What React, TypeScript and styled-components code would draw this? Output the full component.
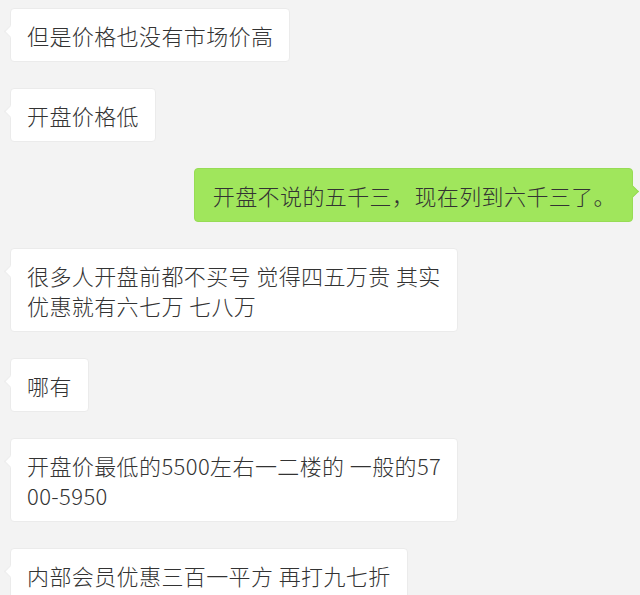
import React from 'react';
import styled, { createGlobalStyle } from 'styled-components';

const GlobalStyle = createGlobalStyle`
  html, body {
    margin: 0;
    padding: 0;
    background: #f3f3f3;
  }
  body {
    font-family: "Noto Sans CJK SC", "Noto Sans", sans-serif;
  }
`;

const Chat = styled.div`
  display: flex;
  flex-direction: column;
  gap: 26px;
  padding: 8px 7px 0 10px;
  height: 595px;
  box-sizing: border-box;
  overflow: hidden;
`;

const Row = styled.div<{ $mine?: boolean }>`
  display: flex;
  justify-content: ${(p) => (p.$mine ? 'flex-end' : 'flex-start')};
`;

const Bubble = styled.div<{ $mine?: boolean }>`
  position: relative;
  padding: 11px 16px;
  padding-left: ${(p) => (p.$mine ? '18px' : '16px')};
  border-radius: 4px;
  font-size: 22px;
  font-weight: 300;
  line-height: 30px;
  letter-spacing: 0.4px;
  color: #333333;
  white-space: nowrap;
  background: ${(p) => (p.$mine ? '#a0e65c' : '#ffffff')};
  border: 1px solid ${(p) => (p.$mine ? '#97dc55' : '#ebebeb')};
  box-sizing: border-box;

  &::before {
    content: '';
    position: absolute;
    top: 18px;
    width: 8px;
    height: 8px;
    background: inherit;
    transform: rotate(45deg);
    ${(p) =>
      p.$mine
        ? 'right: -5px; border-top: 1px solid #97dc55; border-right: 1px solid #97dc55;'
        : 'left: -5px; border-bottom: 1px solid #ebebeb; border-left: 1px solid #ebebeb;'}
  }
`;

type Message = { mine?: boolean; lines: string[] };

const messages: Message[] = [
  { lines: ['但是价格也没有市场价高'] },
  { lines: ['开盘价格低'] },
  { mine: true, lines: ['开盘不说的五千三，现在列到六千三了。'] },
  { lines: ['很多人开盘前都不买号 觉得四五万贵 其实', '优惠就有六七万 七八万'] },
  { lines: ['哪有'] },
  { lines: ['开盘价最低的5500左右一二楼的 一般的57', '00-5950'] },
  { lines: ['内部会员优惠三百一平方 再打九七折'] },
];

export default function App() {
  return (
    <>
      <GlobalStyle />
      <Chat>
        {messages.map((m, i) => (
          <Row key={i} $mine={m.mine}>
            <Bubble $mine={m.mine}>
              {m.lines.map((l, j) => (
                <React.Fragment key={j}>
                  {j > 0 && <br />}
                  {l}
                </React.Fragment>
              ))}
            </Bubble>
          </Row>
        ))}
      </Chat>
    </>
  );
}
